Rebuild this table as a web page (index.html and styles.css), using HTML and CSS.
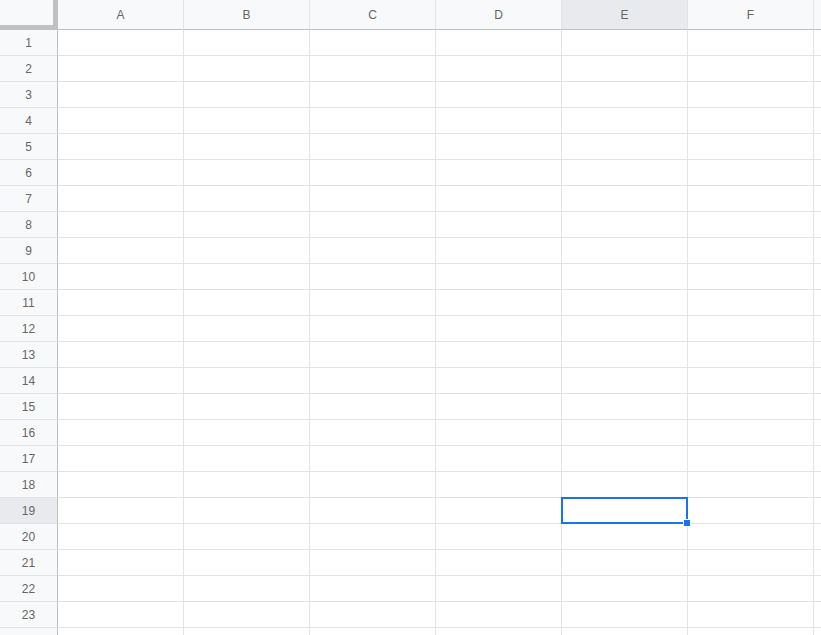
FILE: index.html
```html
<!doctype html>
<html lang="en">
    <head>
        <meta charset="UTF-8" />
        <title>Sheet</title>
        <link rel="stylesheet" href="styles.css">
    </head>
    <body>
        <div id="sheet">
            <table class="grid">
                <thead>
                    <tr>
                        <th class="corner"></th>
                        <th class="colhead">A</th>
                        <th class="colhead">B</th>
                        <th class="colhead">C</th>
                        <th class="colhead">D</th>
                        <th class="colhead active">E</th>
                        <th class="colhead">F</th>
                        <th class="colhead"></th>
                    </tr>
                </thead>
                <tbody>
                    <tr><th class="rowhead">1</th><td></td><td></td><td></td><td></td><td></td><td></td><td></td></tr>
                    <tr><th class="rowhead">2</th><td></td><td></td><td></td><td></td><td></td><td></td><td></td></tr>
                    <tr><th class="rowhead">3</th><td></td><td></td><td></td><td></td><td></td><td></td><td></td></tr>
                    <tr><th class="rowhead">4</th><td></td><td></td><td></td><td></td><td></td><td></td><td></td></tr>
                    <tr><th class="rowhead">5</th><td></td><td></td><td></td><td></td><td></td><td></td><td></td></tr>
                    <tr><th class="rowhead">6</th><td></td><td></td><td></td><td></td><td></td><td></td><td></td></tr>
                    <tr><th class="rowhead">7</th><td></td><td></td><td></td><td></td><td></td><td></td><td></td></tr>
                    <tr><th class="rowhead">8</th><td></td><td></td><td></td><td></td><td></td><td></td><td></td></tr>
                    <tr><th class="rowhead">9</th><td></td><td></td><td></td><td></td><td></td><td></td><td></td></tr>
                    <tr><th class="rowhead">10</th><td></td><td></td><td></td><td></td><td></td><td></td><td></td></tr>
                    <tr><th class="rowhead">11</th><td></td><td></td><td></td><td></td><td></td><td></td><td></td></tr>
                    <tr><th class="rowhead">12</th><td></td><td></td><td></td><td></td><td></td><td></td><td></td></tr>
                    <tr><th class="rowhead">13</th><td></td><td></td><td></td><td></td><td></td><td></td><td></td></tr>
                    <tr><th class="rowhead">14</th><td></td><td></td><td></td><td></td><td></td><td></td><td></td></tr>
                    <tr><th class="rowhead">15</th><td></td><td></td><td></td><td></td><td></td><td></td><td></td></tr>
                    <tr><th class="rowhead">16</th><td></td><td></td><td></td><td></td><td></td><td></td><td></td></tr>
                    <tr><th class="rowhead">17</th><td></td><td></td><td></td><td></td><td></td><td></td><td></td></tr>
                    <tr><th class="rowhead">18</th><td></td><td></td><td></td><td></td><td></td><td></td><td></td></tr>
                    <tr><th class="rowhead active">19</th><td></td><td></td><td></td><td></td><td class="selected"><span class="handle"></span></td><td></td><td></td></tr>
                    <tr><th class="rowhead">20</th><td></td><td></td><td></td><td></td><td></td><td></td><td></td></tr>
                    <tr><th class="rowhead">21</th><td></td><td></td><td></td><td></td><td></td><td></td><td></td></tr>
                    <tr><th class="rowhead">22</th><td></td><td></td><td></td><td></td><td></td><td></td><td></td></tr>
                    <tr><th class="rowhead">23</th><td></td><td></td><td></td><td></td><td></td><td></td><td></td></tr>
                    <tr><th class="rowhead"></th><td></td><td></td><td></td><td></td><td></td><td></td><td></td></tr>
                </tbody>
            </table>
        </div>
    </body>
</html>
```
FILE: styles.css
```css
body {
    margin: 0;
    background: white;
    font-family: "Liberation Sans", Arial, sans-serif;
}

#sheet {
    width: 821px;
    height: 635px;
    overflow: hidden;
}

.grid {
    border-collapse: separate;
    border-spacing: 0;
    table-layout: fixed;
}

.grid th,
.grid td {
    padding: 0;
    border-right: solid 1px #e2e3e3;
    border-bottom: solid 1px #e2e3e3;
}

.grid th {
    background: #f8f9fa;
    color: #666666;
    font-size: 12px;
    font-weight: normal;
    text-align: center;
}

.corner {
    width: 57px;
    min-width: 57px;
    height: 29px;
    box-shadow: inset -4px -4px 0 #c0c0c0;
}

.grid .corner,
.grid .colhead {
    border-bottom-color: #c0c0c0;
}

.colhead {
    width: 125px;
    min-width: 125px;
    height: 29px;
}

.grid .rowhead {
    height: 25px;
    border-right-color: #c0c0c0;
}

.grid .corner {
    border-right-color: #c0c0c0;
}

.grid .active {
    background: #e8eaed;
}

td {
    height: 25px;
}

.selected {
    position: relative;
}

/* blue frame sits over the gridlines around the cell */
.selected::before {
    content: "";
    position: absolute;
    top: -1px;
    left: -1px;
    right: -1px;
    bottom: -1px;
    border: solid 2px #1a73e8;
}

.handle {
    position: absolute;
    right: -4px;
    bottom: -4px;
    width: 6px;
    height: 6px;
    background: #1a73e8;
    border: solid 1px white;
    z-index: 1;
}
```
